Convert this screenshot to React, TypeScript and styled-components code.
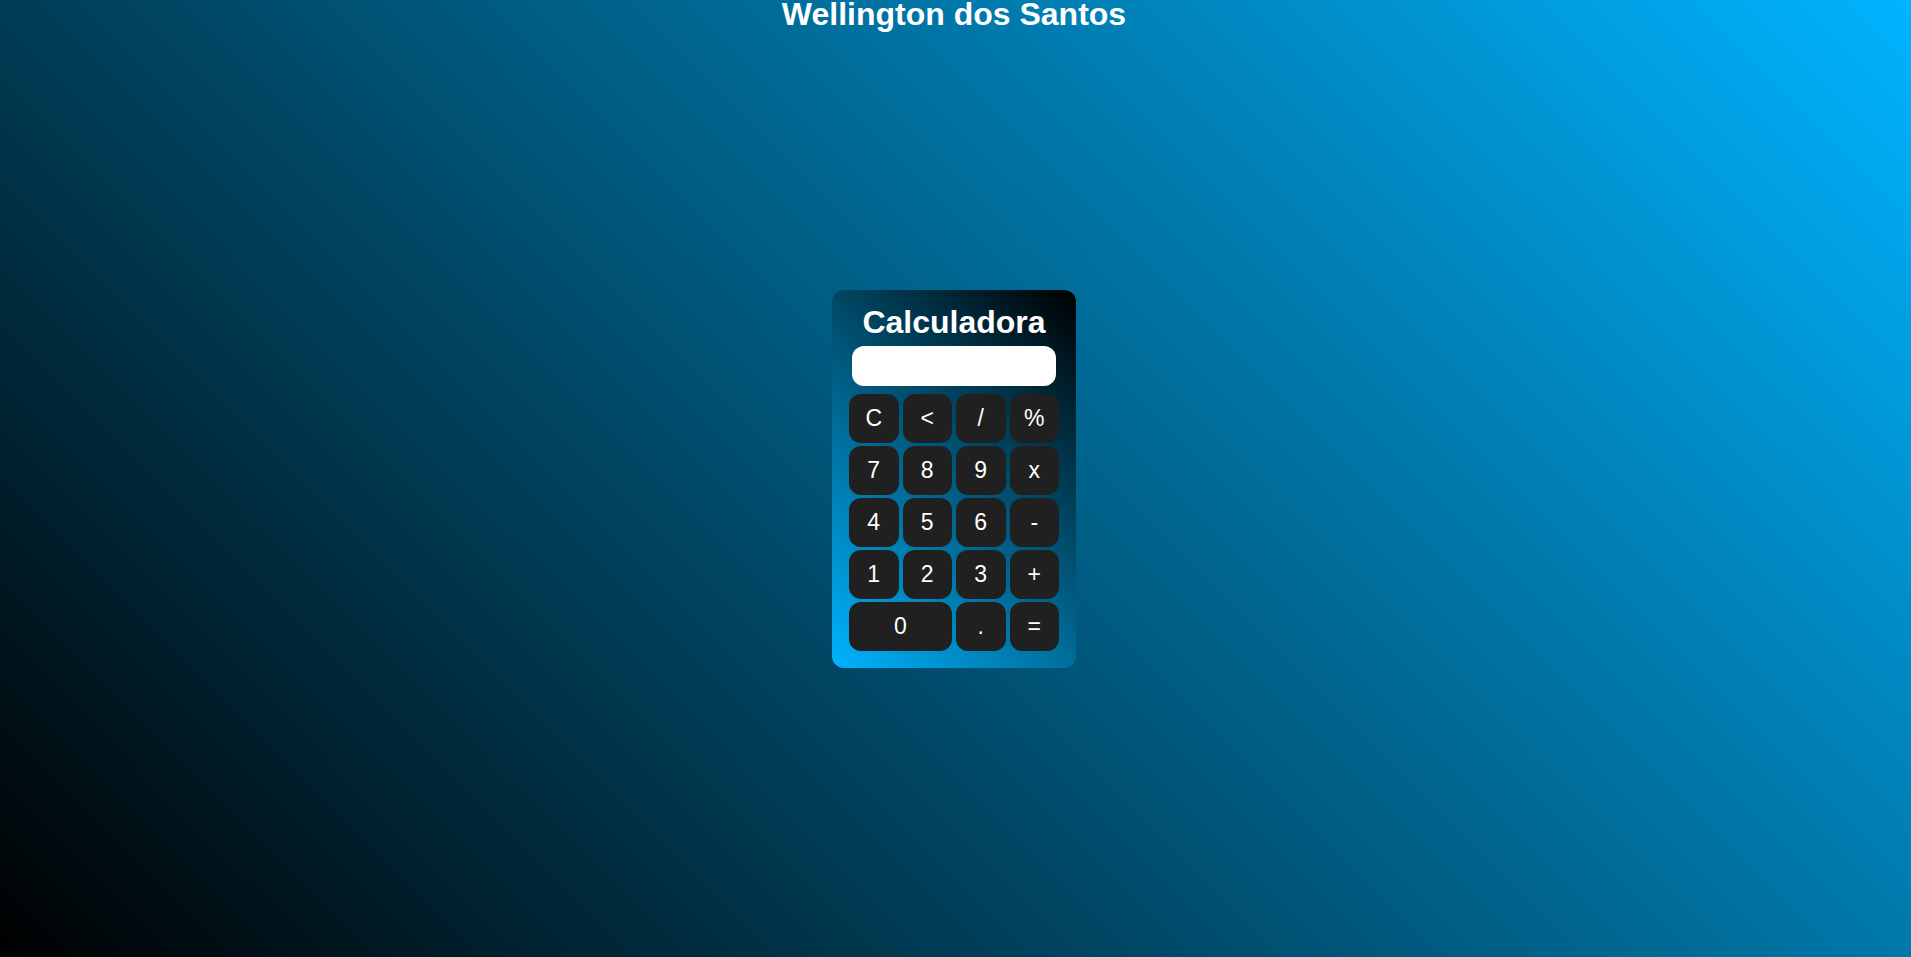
import React from "react";
import styled, { createGlobalStyle } from "styled-components";

const GlobalStyle = createGlobalStyle`
  * { box-sizing: border-box; }
  html, body { margin: 0; padding: 0; }
  body {
    font-family: "Liberation Sans", Arial, sans-serif;
    background: linear-gradient(45deg, #000000, #00b4ff);
    min-height: 100vh;
  }
`;

const Page = styled.div`
  min-height: 100vh;
  padding-right: 3px;
  display: grid;
  grid-template-rows: 1fr auto 1fr;
  justify-items: center;
`;

const Title = styled.h1`
  margin: 0;
  align-self: start;
  font-size: 32px;
  line-height: 28px;
  font-weight: 700;
  color: #ffffff;
`;

const Card = styled.div`
  width: 244px;
  padding: 14px 17px 17px;
  border-radius: 12px;
  background: linear-gradient(225deg, #000000, #00b4ff);
  display: flex;
  flex-direction: column;
  align-items: center;
`;

const CardTitle = styled.h2`
  margin: 0;
  font-size: 32px;
  font-weight: 700;
  color: #ffffff;
`;

const Display = styled.input`
  width: 204px;
  height: 40px;
  margin-top: 5px;
  border: none;
  outline: none;
  border-radius: 12px;
  background: #ffffff;
  padding: 0 12px;
  font-family: inherit;
  font-size: 20px;
  text-align: right;
`;

const Keypad = styled.div`
  margin-top: 8px;
  width: 210px;
  display: grid;
  grid-template-columns: repeat(4, 1fr);
  grid-auto-rows: 49px;
  column-gap: 4px;
  row-gap: 3px;
`;

const Key = styled.button<{ $span?: number }>`
  grid-column: span ${(p) => p.$span ?? 1};
  border: none;
  border-radius: 12px;
  background: #202020;
  color: #ffffff;
  font-family: "Liberation Sans", Arial, sans-serif;
  font-size: 23px;
  cursor: pointer;
  padding: 0;
`;

const keys: { label: string; span?: number }[] = [
  { label: "C" }, { label: "<" }, { label: "/" }, { label: "%" },
  { label: "7" }, { label: "8" }, { label: "9" }, { label: "x" },
  { label: "4" }, { label: "5" }, { label: "6" }, { label: "-" },
  { label: "1" }, { label: "2" }, { label: "3" }, { label: "+" },
  { label: "0", span: 2 }, { label: "." }, { label: "=" },
];

export default function App() {
  return (
    <>
      <GlobalStyle />
      <Page>
        <Title>Wellington dos Santos</Title>
        <Card>
          <CardTitle>Calculadora</CardTitle>
          <Display type="text" readOnly />
          <Keypad>
            {keys.map((k) => (
              <Key key={k.label} $span={k.span}>
                {k.label}
              </Key>
            ))}
          </Keypad>
        </Card>
      </Page>
    </>
  );
}
